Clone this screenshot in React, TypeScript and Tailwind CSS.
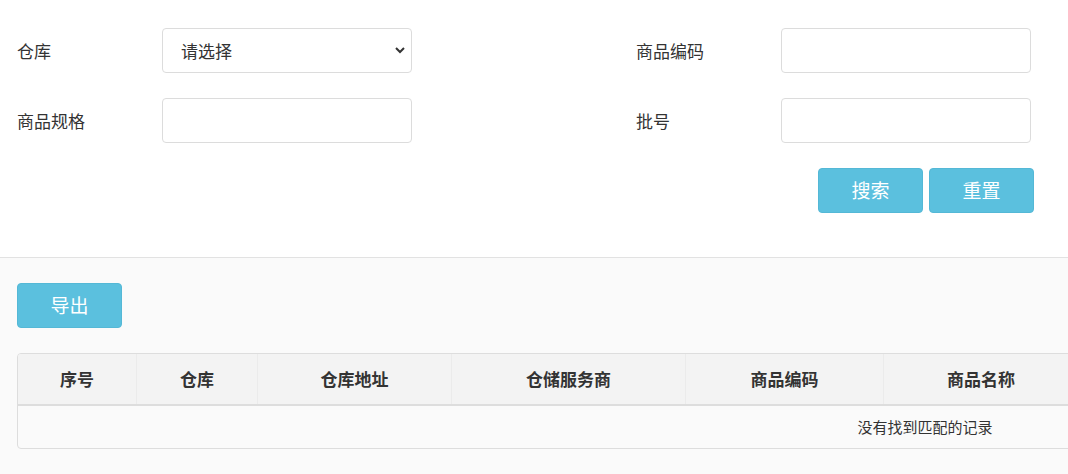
import React from "react";

const font = { fontFamily: '"Noto Sans CJK SC", "Noto Sans", sans-serif' };

function Label({ children }: { children: React.ReactNode }) {
  return <div className="w-[145px] shrink-0 text-[17px] text-[#333]">{children}</div>;
}

function TextInput() {
  return (
    <input
      type="text"
      className="h-[45px] w-[250px] rounded-[4px] border border-[#dcdcdc] bg-white px-3 text-[16px] outline-none"
    />
  );
}

const columns: { title: string; w: number }[] = [
  { title: "序号", w: 119 },
  { title: "仓库", w: 121 },
  { title: "仓库地址", w: 194 },
  { title: "仓储服务商", w: 234 },
  { title: "商品编码", w: 198 },
  { title: "商品名称", w: 195 },
  { title: "", w: 190 },
  { title: "", w: 180 },
  { title: "", w: 190 },
  { title: "", w: 194 },
];

export default function App() {
  return (
    <div className="min-h-[474px] w-full overflow-hidden bg-[#fafafa]" style={font}>
      <div className="border-b border-[#e2e2e2] bg-white pb-[44px] pt-[28px]">
        <div className="flex">
          <div className="flex w-[636px] flex-col gap-[25px] pl-[17px]">
            <div className="flex items-center">
              <Label>仓库</Label>
              <div className="relative h-[45px] w-[250px]">
                <select className="h-full w-full appearance-none rounded-[4px] border border-[#dcdcdc] bg-white pl-[18px] text-[17px] text-[#333] outline-none">
                  <option>请选择</option>
                </select>
                <svg
                  className="pointer-events-none absolute right-[6px] top-[17px]"
                  width="12"
                  height="10"
                  viewBox="0 0 12 10"
                >
                  <path d="M2 3 L6 7 L10 3" fill="none" stroke="#333" strokeWidth="2" />
                </svg>
              </div>
            </div>
            <div className="flex items-center">
              <Label>商品规格</Label>
              <TextInput />
            </div>
          </div>
          <div className="flex flex-col gap-[25px]">
            <div className="flex items-center">
              <Label>商品编码</Label>
              <TextInput />
            </div>
            <div className="flex items-center">
              <Label>批号</Label>
              <TextInput />
            </div>
          </div>
        </div>
        <div className="mt-[25px] flex justify-end gap-[6px] pr-[34px]">
          <button className="h-[45px] w-[105px] rounded-[4px] border border-[#54b8d6] bg-[#5bc0de] text-[19px] text-white">
            搜索
          </button>
          <button className="h-[45px] w-[105px] rounded-[4px] border border-[#54b8d6] bg-[#5bc0de] text-[19px] text-white">
            重置
          </button>
        </div>
      </div>
      <div className="px-[17px] pt-[25px]">
        <button className="h-[45px] w-[105px] rounded-[4px] border border-[#54b8d6] bg-[#5bc0de] text-[19px] text-white">
          导出
        </button>
        <div className="mt-[25px] w-[1816px] overflow-hidden rounded-[4px] border border-[#dddddd] bg-[#fafafa]">
          <div className="flex h-[52px] border-b-2 border-[#dddddd] bg-[#f3f3f3]">
            {columns.map((c, i) => (
              <div
                key={i}
                className={
                  "flex shrink-0 items-center justify-center text-[17px] font-bold text-[#333] " +
                  (i < columns.length - 1 ? "border-r border-[#ebebeb]" : "")
                }
                style={{ width: c.w }}
              >
                {c.title}
              </div>
            ))}
          </div>
          <div className="flex h-[42px] items-center justify-center text-[15px] text-[#333]">
            没有找到匹配的记录
          </div>
        </div>
      </div>
    </div>
  );
}
